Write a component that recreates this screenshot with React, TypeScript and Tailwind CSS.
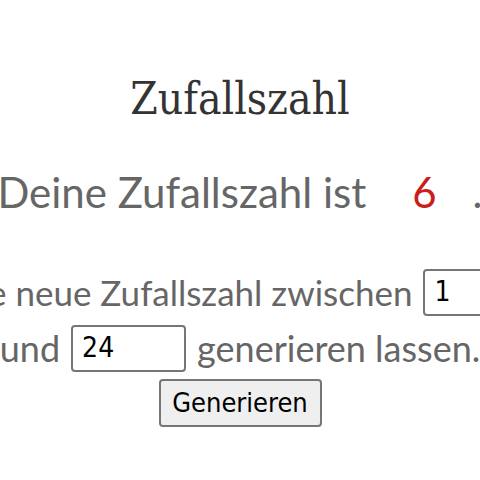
export default function App() {
  const fieldClass =
    "w-[115px] h-[47px] border-2 border-[#767676] rounded-[4px] px-[9px] text-[28px] text-black font-['DejaVu_Sans',sans-serif] [font-stretch:condensed]";

  return (
    <div className="w-[480px] h-[480px] overflow-hidden bg-white font-['Lato',sans-serif] text-[#666]">
      <h1 className="pt-[69px] flex justify-center text-[44px] leading-[60px] text-[#333] font-['DejaVu_Serif',serif] [font-stretch:condensed]">
        Zufallszahl
      </h1>
      <div className="mt-[38px] flex justify-center">
        <p className="shrink-0 flex items-baseline whitespace-nowrap text-[42px] leading-[50px]">
          <span>Deine Zufallszahl ist</span>
          <span className="ml-[46px] mr-[36px] text-[#c81e1e]">6</span>
          <span>.</span>
        </p>
      </div>
      <div className="mt-[50px] flex justify-center">
        <p className="shrink-0 flex items-center gap-[11px] whitespace-nowrap text-[35px] leading-[50px]">
          <span>eine neue Zufallszahl zwischen</span>
          <input readOnly value="1" className={fieldClass} />
        </p>
      </div>
      <div className="mt-[6px] flex justify-center">
        <p className="shrink-0 flex items-center gap-[11px] whitespace-nowrap text-[36px] leading-[50px]">
          <span>und</span>
          <input readOnly value="24" className={fieldClass} />
          <span>generieren lassen.</span>
        </p>
      </div>
      <div className="mt-[6px] flex justify-center">
        <button className="w-[163px] h-[48px] bg-[#efefef] border-2 border-[#767676] rounded-[4px] text-[27px] text-black font-['DejaVu_Sans',sans-serif] [font-stretch:condensed]">
          Generieren
        </button>
      </div>
    </div>
  );
}
